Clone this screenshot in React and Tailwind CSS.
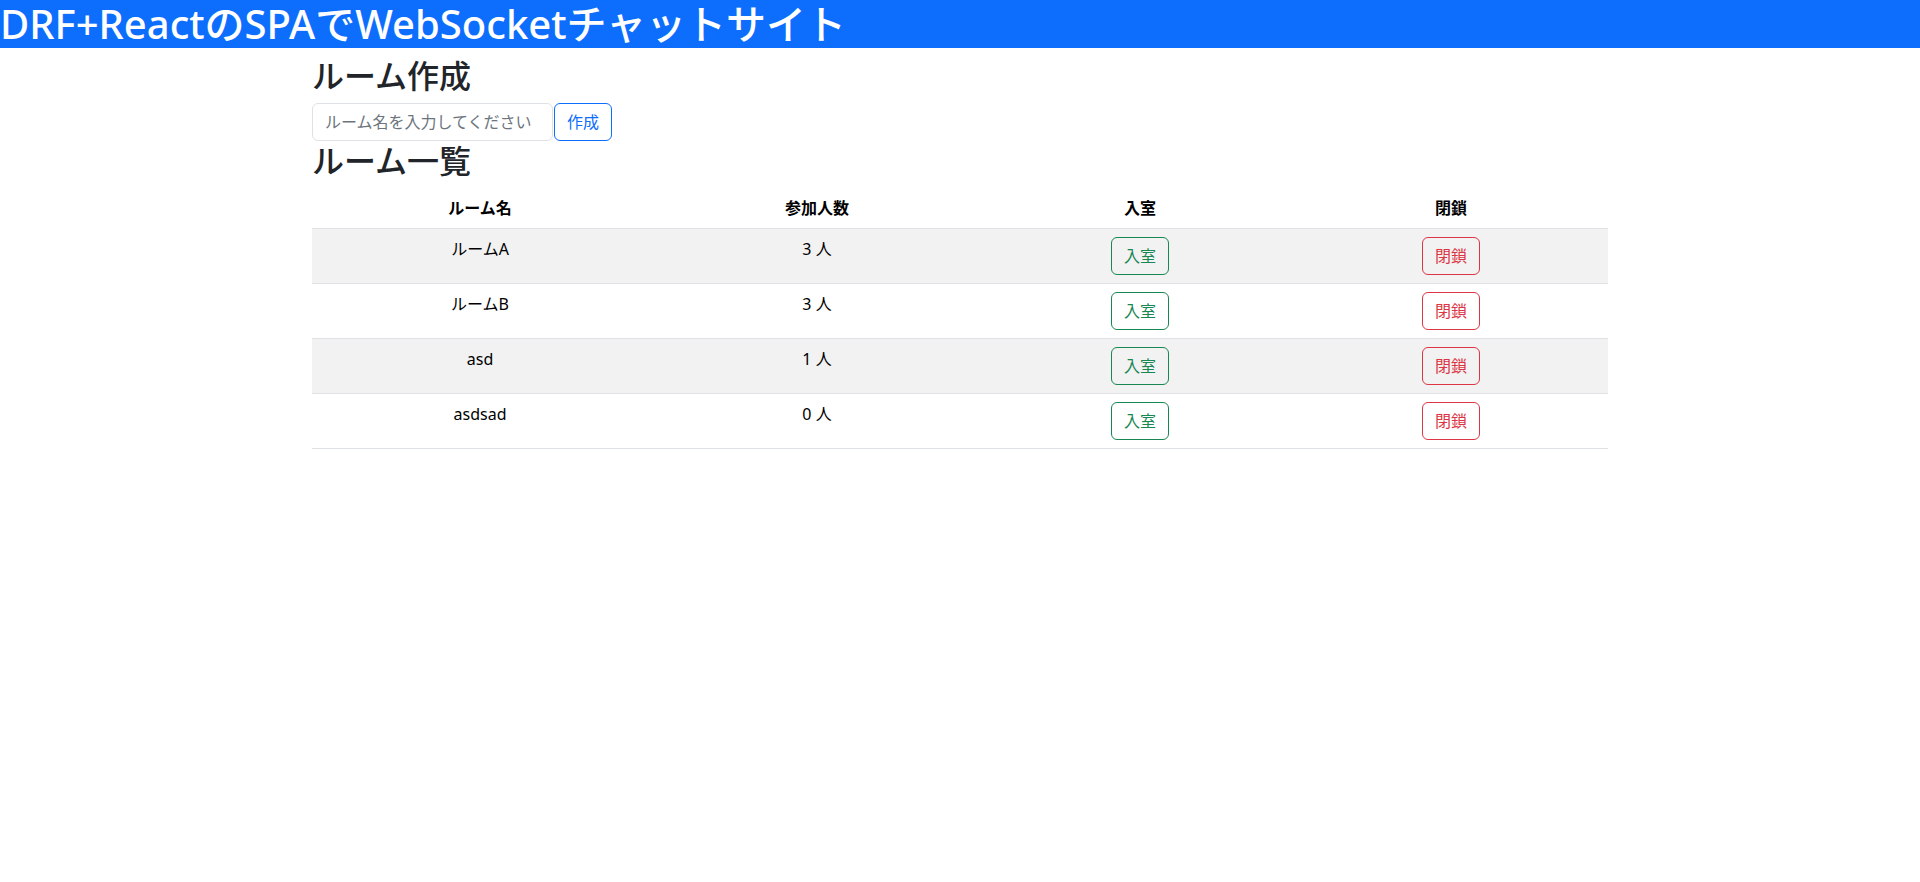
import { useState } from "react"

const rooms = [
    { id: 1, name: "ルームA", count: 3 },
    { id: 2, name: "ルームB", count: 3 },
    { id: 3, name: "asd", count: 1 },
    { id: 4, name: "asdsad", count: 0 },
]

function RoomCreate() {
    const [name, setName] = useState("")
    return (
        <>
            <h2 className="mt-[9px] mb-2 text-[32px] leading-[38px] font-medium text-[#212529]">ルーム作成</h2>
            <div className="flex items-center gap-px">
                <input
                    value={name}
                    onChange={(e) => setName(e.target.value)}
                    placeholder="ルーム名を入力してください"
                    className="w-[241px] h-[38px] px-3 text-base text-[#212529] border border-[#dee2e6] rounded-md placeholder:text-[#6c757d] outline-none"
                />
                <button className="h-[38px] px-3 text-base text-[#0d6efd] border border-[#0d6efd] rounded-md">作成</button>
            </div>
        </>
    )
}

function RoomList() {
    return (
        <>
            <h2 className="mt-px mb-2 text-[32px] leading-[38px] font-medium text-[#212529]">ルーム一覧</h2>
            <table className="w-full table-fixed border-collapse text-base text-black text-center">
                <colgroup>
                    <col className="w-[336px]" />
                    <col className="w-[338px]" />
                    <col className="w-[308px]" />
                    <col className="w-[314px]" />
                </colgroup>
                <thead>
                    <tr className="border-b border-[#dee2e6]">
                        <th className="p-2 font-bold leading-6">ルーム名</th>
                        <th className="p-2 font-bold leading-6">参加人数</th>
                        <th className="p-2 font-bold leading-6">入室</th>
                        <th className="p-2 font-bold leading-6">閉鎖</th>
                    </tr>
                </thead>
                <tbody>
                    {rooms.map((room, i) => (
                        <tr key={room.id} className={`border-b border-[#dee2e6] ${i % 2 === 0 ? "bg-[#f2f2f2]" : "bg-white"}`}>
                            <td className="p-2 align-top leading-6">{room.name}</td>
                            <td className="p-2 align-top leading-6">{room.count} 人</td>
                            <td className="p-2 align-top">
                                <button className="h-[38px] px-3 text-base text-[#198754] border border-[#198754] rounded-md">入室</button>
                            </td>
                            <td className="p-2 align-top">
                                <button className="h-[38px] px-3 text-base text-[#dc3545] border border-[#dc3545] rounded-md">閉鎖</button>
                            </td>
                        </tr>
                    ))}
                </tbody>
            </table>
        </>
    )
}

export default function App() {
    return (
        <div className="min-h-screen bg-white font-['Noto_Sans','Noto_Sans_CJK_JP',sans-serif]">
            <header className="h-12 bg-[#0d6efd]">
                <h1 className="text-[40px] leading-[48px] font-medium text-white whitespace-nowrap">DRF+ReactのSPAでWebSocketチャットサイト</h1>
            </header>
            <main className="w-[1320px] mx-auto px-3">
                <RoomCreate />
                <RoomList />
            </main>
        </div>
    )
}
